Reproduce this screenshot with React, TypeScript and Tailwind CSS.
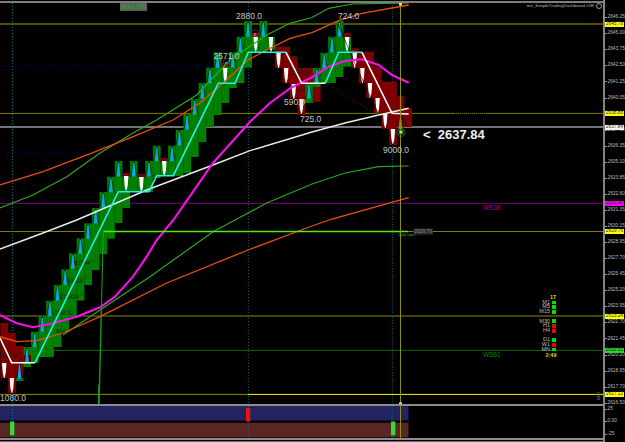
// Renko chart with MA overlays, price axis and the small dashboard table
const BW = 7.62;
const colX = (n: number) => 23.3 + BW * n;

// n, top, bottom, colour
type Col = [number, number, number, 'g' | 'r'];
const cols: Col[] = [
  [-3, 323, 378, 'r'], [-2, 333, 393, 'r'], [-1, 346, 378, 'r'], [-1, 378, 381, 'g'],
  [0, 347, 367, 'g'], [0, 355, 363, 'r'], [1, 331.7, 363, 'g'], [2, 316, 357, 'g'], [3, 300.7, 357, 'g'],
  [4, 285, 347, 'g'], [5, 269.3, 331.7, 'g'], [6, 253.3, 316, 'g'], [7, 238.3, 300.5, 'g'],
  [8, 223.3, 285, 'g'], [9, 208, 270, 'g'], [10, 192, 254, 'g'], [11, 176.7, 238.7, 'g'],
  [12, 161, 223, 'g'], [13, 173, 208, 'g'], [14, 161, 192, 'g'], [15, 177, 192, 'g'], [16, 161, 192, 'g'],
  [17, 145.7, 178, 'g'], [18, 158, 176, 'g'], [19, 145.7, 176, 'g'], [20, 130, 176, 'g'], [21, 114, 173, 'g'],
  [22, 99, 157, 'g'], [23, 83, 142, 'g'], [24, 67.7, 127, 'g'], [25, 52.3, 115, 'g'], [26, 63, 103, 'g'],
  [27, 52, 88, 'g'], [28, 36.7, 83, 'g'], [29, 21, 67.7, 'g'], [30, 33, 52.3, 'g'], [31, 21, 52, 'g'],
  [32, 36.7, 50, 'g'], [33, 46.7, 68, 'r'], [34, 46.7, 83.3, 'r'], [35, 56, 98, 'r'], [36, 68, 115, 'r'],
  [37, 68, 83, 'r'], [37, 83, 103, 'g'], [38, 68, 87, 'g'], [38, 87, 102, 'r'], [39, 52.7, 83, 'g'],
  [40, 36.7, 83, 'g'], [41, 21, 77, 'g'], [42, 36.7, 66.7, 'g'], [42, 33, 37, 'r'], [43, 48.3, 68, 'r'],
  [44, 51.7, 83, 'r'], [45, 51.7, 98, 'r'], [46, 66.7, 113, 'r'], [47, 81.7, 129, 'r'], [48, 81.7, 145, 'r'],
  [49, 96, 127, 'r'], [50, 108, 127, 'r'],
];

// little red caps above the down candles
const caps: [number, number][] = [[13, 173], [15, 174], [18, 158], [26, 63], [30, 33]];

const blue: [number, number][] = [
  [-1, 363], [0, 347], [1, 331.7], [2, 316], [3, 300.7], [4, 285], [5, 269.3], [6, 253.3], [7, 238.3], [8, 223.3],
  [9, 208], [10, 192], [11, 176.7], [12, 161], [14, 161], [16, 161], [17, 145.7], [19, 145.7], [20, 130], [21, 114],
  [22, 99], [23, 83], [24, 67.7], [25, 52.3], [27, 52], [28, 36.7], [29, 21], [31, 21], [37, 83], [38, 68],
  [39, 52.7], [40, 36.7], [41, 21], [49, 114],
];

const white: [number, number][] = [
  [-3, 363], [-2, 378], [13, 176], [15, 177], [18, 161], [26, 68], [30, 37], [32, 37], [33, 53], [34, 68], [35, 84],
  [36, 99], [42, 37], [43, 53], [44, 68], [45, 83], [46, 98], [47, 113], [48, 129],
];

const trendWhiteA = '0,338 11.7,362.7 35,362.7';
const trendCyanA = '35,362.7 118.3,191.7 149,191.7 156.7,175.7 173.3,175.7 218.3,83.3 235,83.3 248.3,52.3 286,52.3';
const trendWhiteB = '286,52.3 301.7,83.3 325.3,83.3';
const trendCyanB = '325.3,83.3 338.7,52.3 362,52.3';
const trendWhiteC = '362,52.3 392,113.3 408.7,114';

const magenta =
  '0,315 16.7,323.3 33,327.3 50,324 76.7,316.7 100,307.3 115,296.7 133,276.7 146.7,256.7 156.7,240 173.3,220 213,163 250,121.7 270,103 290,88.3 312,77.3 328.7,66.7 345,61 362,59.3 378.7,65 392,75 408.7,82.7';
const whiteMa = '0,249 43,233 76.7,220 146.7,190 213,165 250,150.7 312,132 345,123 378.7,115 408.7,108.3';
const orangeLow = '0,336.7 16.7,341.7 36.7,340.7 63,333 100,316.7 166.7,283 248,250 312,226 332,219 408.7,197.7';
const orangeHigh = '0,185 43,171.7 93,152.7 133,136.7 173,120 200,103 226.7,80 248,60 266.7,50 290,38.3 312,32.7 338.7,20.7 362,13.3 408.7,5';
const greenHigh = '0,208 33,195 66.7,176.7 100,153 133,133 156.7,120 196.7,95 230,60 266.7,35 290,23.3 312,17.5 328.7,8.3 352,4 408.7,3';
const greenLow = '63,335 100,310 150,276.7 213,231.7 235,220 266.7,203 312,184 345,173 378.7,166.7 408.7,166';

const brickNotes: [number, number, string][] = [
  [72, 265, '2623.44'], [65, 283, '2626.16'], [55, 299, '2517.2624'], [55, 315, '2506.52'], [56, 333, '90.5'],
  [290, 60, '745.0'], [292, 75, '2640.30'], [295, 92, '21.0'], [0, 358, '2622.37'],
];
const brickDots: [number, number, number][] = [
  [72, 261, 100], [65, 278, 92], [55, 294, 84], [55, 310, 78], [290, 55, 305], [292, 70, 312], [338, 52, 365], [120, 176, 170],
  [330, 36, 352], [0, 353, 24],
];

// the tick under the 2638.88 tag stays blank, the tag covers it
const ticks = [
  '2646.25', '2645.00', '2643.75', '2642.50', '2641.25', '2640.05', '', '2637.60', '2636.35', '2635.10',
  '2633.85', '2632.60', '2631.35', '2630.15', '2628.95', '2627.70', '2626.45', '2625.20', '2623.95', '2622.70',
  '2621.45', '2620.20', '2618.95', '2617.70', '2616.50',
];

const tags = [
  { label: '2645.78', cls: 'top-[21.5px] bg-[#ffff00] text-[#333]' },
  { label: '2638.88', cls: 'top-[110.8px] bg-[#ffff00] text-[#333]' },
  { label: '2637.84', cls: 'top-[124.6px] bg-[#f2f2f2] text-[#333]' },
  { label: '2631.94', cls: 'top-[200.5px] bg-[#ff00ff] text-[#333]' },
  { label: '2629.76', cls: 'top-[228.8px] bg-[#ffff00] text-[#333]' },
  { label: '2623.24', cls: 'top-[313.5px] bg-[#ffff00] text-[#333]' },
  { label: '2620.51', cls: 'top-[347.8px] bg-[#32cd32] text-[#0b3b0b]' },
  { label: '2617.12', cls: 'top-[391.8px] bg-[#ffff00] text-[#333]' },
];

const frames = [
  [['M1', 1], ['M5', 1], ['M15', 1]],
  [['M30', 1], ['H1', 0], ['H4', 0]],
  [['D1', 1], ['W1', 0], ['MN', 1]],
] as [string, number][][];

function TimeframeTable() {
  return (
    <div className="absolute right-[46.5px] top-[292.3px] flex flex-col items-end gap-[4.8px] text-[5.5px] leading-none text-[#bdbdbd]">
      <div className="flex flex-col items-end">
        <div className="flex h-[4.8px] items-center pr-[0.5px] font-bold text-[#d8d800]">17</div>
        {frames[0].map(([name, up]) => (
          <FrameRow key={name} name={name} up={!!up} />
        ))}
      </div>
      <div className="flex flex-col items-end">
        {frames[1].map(([name, up]) => (
          <FrameRow key={name} name={name} up={!!up} />
        ))}
      </div>
      <div className="flex flex-col items-end">
        {frames[2].map(([name, up]) => (
          <FrameRow key={name} name={name} up={!!up} />
        ))}
        <div className="mt-px flex h-[4.8px] items-center font-bold text-[#d8d800]">2:49</div>
      </div>
    </div>
  );
}

function FrameRow({ name, up }: { name: string; up: boolean }) {
  return (
    <div className="flex h-[4.7px] items-center gap-[1.5px] pr-px">
      <span>{name}</span>
      <span className={up ? 'h-[3.8px] w-[4px] bg-[#00e000]' : 'h-[3.8px] w-[4px] bg-[#f00000]'} />
    </div>
  );
}

function ChartDrawing() {
  return (
    <svg className="block" width="603" height="401" viewBox="0 3 603 401" fontFamily="'Liberation Sans', Arial, sans-serif">
      {/* level lines */}
      <line x1="0" x2="603" y1="24" y2="24" stroke="#6a6a00" strokeWidth="1.4" />
      <line x1="0" x2="603" y1="113.4" y2="113.4" stroke="#7d7d00" strokeWidth="1" />
      <line x1="0" x2="603" y1="127" y2="127" stroke="#747474" strokeWidth="1.8" />
      <line x1="0" x2="603" y1="203.3" y2="203.3" stroke="#7f007f" strokeWidth="1" />
      <line x1="0" x2="603" y1="231.5" y2="231.5" stroke="#7d7d00" strokeWidth="1" />
      <line x1="0" x2="603" y1="316" y2="316" stroke="#5c5c00" strokeWidth="1.5" />
      <line x1="0" x2="603" y1="350.4" y2="350.4" stroke="#0d6a0d" strokeWidth="1" />
      <line x1="0" x2="248" y1="394.4" y2="394.4" stroke="#8c8c00" strokeWidth="1" />
      <line x1="248" x2="603" y1="394.4" y2="394.4" stroke="#f2f200" strokeWidth="1" />
      <line x1="0" x2="213" y1="66" y2="66" stroke="#00008c" strokeWidth="1" strokeDasharray="1 2" />
      <line x1="0" x2="150" y1="153" y2="153" stroke="#00008c" strokeWidth="1" strokeDasharray="1 2" />

      {/* session markers */}
      <line x1="12.5" x2="12.5" y1="3" y2="404" stroke="#0f6f8c" strokeWidth="1" strokeDasharray="1 2" />
      <line x1="248.3" x2="248.3" y1="3" y2="404" stroke="#0f6f8c" strokeWidth="1" strokeDasharray="1 2" />
      <line x1="392.5" x2="392.5" y1="3" y2="404" stroke="#0c5870" strokeWidth="1.4" strokeDasharray="1 1.6" />

      {/* renko bricks */}
      {cols.map(([n, top, bottom, c], i) => (
        <rect key={i} x={colX(n)} y={top} width={BW + 0.1} height={bottom - top} fill={c === 'g' ? '#007f00' : '#7f0000'} />
      ))}
      {caps.map(([n, y], i) => (
        <rect key={i} x={colX(n)} y={y} width={BW} height={3.5} fill="#7f0000" />
      ))}
      {brickDots.map(([x1, y, x2], i) => (
        <line key={i} x1={x1} x2={x2} y1={y} y2={y} stroke="#052005" strokeWidth="0.6" strokeDasharray="1 1.5" />
      ))}
      {brickNotes.map(([x, y, t], i) => (
        <text key={i} x={x} y={y} fontSize="5" fill="#1d1d0d">
          {t}
        </text>
      ))}

      {/* candles */}
      {blue.map(([n, y], i) => {
        const cx = colX(n) + BW / 2;
        return (
          <g key={i}>
            <polyline
              points={`${cx - 3.4},${y + 15.5} ${cx},${y - 0.5} ${cx + 3.4},${y + 15.5}`}
              fill="none"
              stroke="#000"
              strokeWidth="0.45"
            />
            <polygon points={`${cx - 0.6},${y + 2} ${cx + 0.6},${y + 2} ${cx + 1.7},${y + 15.5} ${cx - 1.9},${y + 15.5}`} fill="#08a8ee" />
          </g>
        );
      })}
      {white.map(([n, y], i) => {
        const cx = colX(n) + BW / 2;
        return (
          <g key={i}>
            <line x1={cx} x2={cx} y1={y + 13} y2={y + 16.5} stroke="#000" strokeWidth="1" />
            <polygon
              points={`${cx - 2.2},${y} ${cx + 2.2},${y} ${cx + 1.5},${y + 10} ${cx + 0.3},${y + 15} ${cx - 0.3},${y + 15} ${cx - 1.5},${y + 10}`}
              fill="#fff"
            />
          </g>
        );
      })}

      {/* zigzag bits */}
      <polyline points="325,83 375,113" fill="none" stroke="#7f0000" strokeWidth="0.8" strokeDasharray="2 2" />
      <polyline points="338,24 356,66 378,113 392,113" fill="none" stroke="#000" strokeWidth="0.6" />
      <polyline points="400,115 408,127" fill="none" stroke="#000" strokeWidth="0.8" />
      <line x1="455" x2="486" y1="113.4" y2="113.4" stroke="#000" strokeWidth="0.8" strokeDasharray="1 1" />

      {/* moving averages */}
      <polyline points={greenHigh} fill="none" stroke="#2fa81f" strokeWidth="1.2" />
      <polyline points={greenLow} fill="none" stroke="#28a81c" strokeWidth="1.2" />
      <polyline points={orangeHigh} fill="none" stroke="#e8500f" strokeWidth="1.3" />
      <polyline points={orangeLow} fill="none" stroke="#e8500f" strokeWidth="1.3" />
      <polyline points={whiteMa} fill="none" stroke="#ececec" strokeWidth="1.4" />
      <polyline points={magenta} fill="none" stroke="#f810e8" strokeWidth="2.1" />

      {/* trend step line */}
      <polyline points={trendWhiteA} fill="none" stroke="#fff" strokeWidth="1.6" />
      <polyline points={trendCyanA} fill="none" stroke="#1ff0f0" strokeWidth="1.6" />
      <polyline points={trendWhiteB} fill="none" stroke="#fff" strokeWidth="1.6" />
      <polyline points={trendCyanB} fill="none" stroke="#1ff0f0" strokeWidth="1.6" />
      <polyline points={trendWhiteC} fill="none" stroke="#fff" strokeWidth="1.6" />

      {/* daily open */}
      <line x1="103.3" x2="408" y1="231.5" y2="231.5" stroke="#55e81a" strokeWidth="1.4" />
      <polyline points="103.3,231.5 101.5,305" fill="none" stroke="#1fa01f" strokeWidth="1" />
      <polyline points="101.5,305 99.5,385" fill="none" stroke="#1a9a1a" strokeWidth="1.4" />
      <polyline points="99.2,385 98.8,404" fill="none" stroke="#1a9a1a" strokeWidth="2" />
      <text x="398.5" y="235.5" fontSize="3.4" fill="#30c020">
        Daily Open
      </text>
      <rect x="413.5" y="228.5" width="19.5" height="6.2" fill="#2c2c2c" />
      <text x="414.5" y="233.4" fontSize="4.8" fill="#8a8a8a">
        2629.76
      </text>

      {/* cursor */}
      <line x1="400.5" x2="400.5" y1="3" y2="404" stroke="#8f8f10" strokeWidth="1" />
      <rect x="399" y="3" width="3" height="2.5" fill="#f0e060" />
      <rect x="399" y="402.5" width="3" height="1.5" fill="#f0f0d0" />

      {/* markers */}
      <circle cx="255" cy="33" r="3.5" fill="none" stroke="#555" strokeWidth="0.6" />
      <circle cx="255" cy="34.5" r="1.4" fill="#f04060" />
      <circle cx="226" cy="62" r="3" fill="none" stroke="#444" strokeWidth="0.6" />
      <circle cx="226" cy="63" r="1.2" fill="#2090e0" />
      <circle cx="158" cy="152" r="3.2" fill="none" stroke="#555" strokeWidth="0.6" />
      <rect x="398.5" y="130" width="5" height="4.5" fill="#109010" />
      <rect x="399.8" y="131" width="2.2" height="2.2" fill="#e8e840" />
      <circle cx="401" cy="132.3" r="4.2" fill="none" stroke="#666" strokeWidth="0.6" />

      {/* wave labels */}
      <g fontSize="8.5" fill="#c4c4c4">
        <text x="236" y="19">2880.0</text>
        <text x="338" y="19">724.0</text>
        <text x="213.5" y="59">2571.0</text>
        <text x="284" y="105">590.0</text>
        <text x="300" y="122">725.0</text>
        <text x="383" y="153">9000.0</text>
        <text x="0" y="401">1080.0</text>
      </g>
      <text x="423" y="139" fontSize="13" fontWeight="700" fill="#f0f0f0" xmlSpace="preserve">
        {'<  2637.84'}
      </text>
      <text x="483" y="209.5" fontSize="6.5" fill="#a000a0">
        WS38
      </text>
      <text x="483" y="356.5" fontSize="6.5" fill="#0f800f">
        WS61
      </text>

      {/* dashboard corner mark near the bottom right */}
      <text x="0" y="0" fontSize="4" fill="#777" transform="translate(600 400) rotate(-90)">
        ME3
      </text>
    </svg>
  );
}

function IndicatorPane() {
  return (
    <svg className="block" width="603" height="32" viewBox="0 406 603 32">
      <rect x="0" y="406" width="408.5" height="14.5" fill="#23235f" />
      <rect x="0" y="422.7" width="408.5" height="14.6" fill="#5a2525" />
      <line x1="12.5" x2="12.5" y1="406" y2="438" stroke="#0f6f8c" strokeWidth="1" strokeDasharray="1 2" />
      <line x1="248.3" x2="248.3" y1="406" y2="438" stroke="#0f6f8c" strokeWidth="1" strokeDasharray="1 2" />
      <line x1="392.5" x2="392.5" y1="406" y2="438" stroke="#0c5870" strokeWidth="1.4" strokeDasharray="1 1.6" />
      <line x1="400.5" x2="400.5" y1="406" y2="438" stroke="#8f8f10" strokeWidth="1" />
      <rect x="10" y="421.5" width="4.4" height="13.8" fill="#37d837" />
      <rect x="246" y="408" width="4.2" height="13.5" fill="#ee0f0f" />
      <rect x="391" y="421.5" width="4.4" height="13.8" fill="#37d837" />
    </svg>
  );
}

function PriceAxis() {
  return (
    <div className="relative h-[442px] w-[22px] shrink-0 border-l-2 border-[#858585] text-[4.8px] leading-none text-[#bcbcbc]">
      <div className="h-[404px] pt-[9.67px]">
        {ticks.map((t, i) => (
          <div key={i} className="flex h-[16.07px] items-center gap-px">
            <span className="h-px w-[1.5px] bg-[#9a9a9a]" />
            <span>{t}</span>
          </div>
        ))}
      </div>
      <div className="flex flex-col gap-[2.5px]">
        {['25', '0.00', '-25'].map((t) => (
          <div key={t} className="flex h-[10px] items-center gap-px">
            <span className="h-px w-[1.5px] bg-[#9a9a9a]" />
            <span>{t}</span>
          </div>
        ))}
      </div>
      {tags.map((tag) => (
        <div key={tag.label} className={`absolute left-0 flex h-[5px] w-[19px] items-center justify-center ${tag.cls}`}>
          {tag.label}
        </div>
      ))}
    </div>
  );
}

export default function App() {
  return (
    <div className="flex h-[442px] w-[625px] overflow-hidden bg-black font-['Liberation_Sans',Arial,sans-serif]">
      <div className="flex w-[603px] flex-col pt-px">
        <div className="h-[2px] bg-[#7d7d7d]" />
        <div className="relative h-[401px]">
          <ChartDrawing />
          <div className="absolute left-[120px] top-0 flex h-[7.6px] w-[27px] items-center justify-center whitespace-nowrap bg-[#5c5c5c] text-[6.5px] leading-none text-[#22b422]">
            alma ON
          </div>
          <div className="absolute right-0 top-0 flex items-center gap-[2px] whitespace-nowrap pr-[1px] text-[4.4px] leading-none text-[#b8b8b8]">
            <span>me_SimpleTradingDashboard v1R</span>
            <span className="h-[6px] w-[6px] rounded-full border-[0.6px] border-[#9a9a9a]" />
          </div>
          <TimeframeTable />
        </div>
        <div className="h-[2px] bg-[#8c8c8c]" />
        <IndicatorPane />
        <div className="h-[1.6px] bg-[#8c8c8c]" />
        <div className="mt-[1.4px] h-px bg-[#6a6a6a]" />
      </div>
      <PriceAxis />
    </div>
  );
}
